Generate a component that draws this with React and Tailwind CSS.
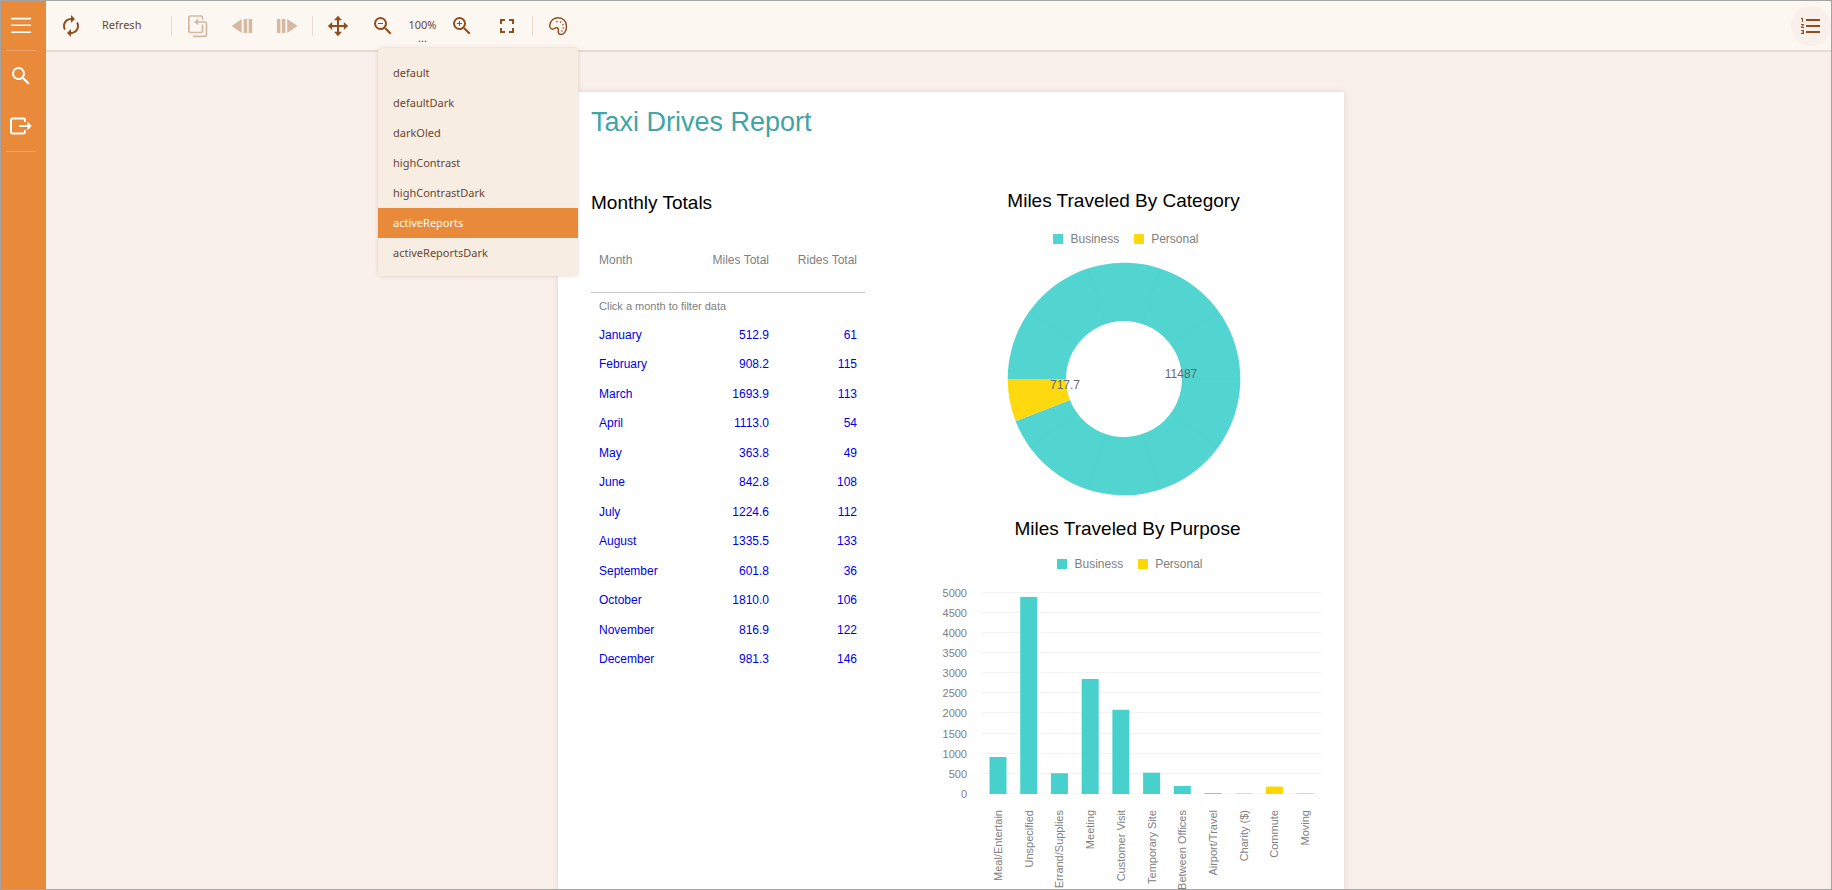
import React from "react";
import {
  MdAutorenew,
  MdSearch,
  MdZoomIn,
  MdZoomOut,
  MdFullscreen,
  MdFormatListNumbered,
} from "react-icons/md";

const months = [
  ["January", "512.9", 61],
  ["February", "908.2", 115],
  ["March", "1693.9", 113],
  ["April", "1113.0", 54],
  ["May", "363.8", 49],
  ["June", "842.8", 108],
  ["July", "1224.6", 112],
  ["August", "1335.5", 133],
  ["September", "601.8", 36],
  ["October", "1810.0", 106],
  ["November", "816.9", 122],
  ["December", "981.3", 146],
];

const themes = [
  "default",
  "defaultDark",
  "darkOled",
  "highContrast",
  "highContrastDark",
  "activeReports",
  "activeReportsDark",
];

const purposes = [
  ["Meal/Entertain", 918, "b"],
  ["Unspecified", 4890, "b"],
  ["Errand/Supplies", 515, "b"],
  ["Meeting", 2855, "b"],
  ["Customer Visit", 2090, "b"],
  ["Temporary Site", 530, "b"],
  ["Between Offices", 200, "b"],
  ["Airport/Travel", 20, "b"],
  ["Charity ($)", 15, "p"],
  ["Commute", 185, "p"],
  ["Moving", 18, "p"],
];

function MenuIcon() {
  return (
    <svg width="24" height="24" viewBox="0 0 24 24" stroke="currentColor" strokeWidth="1.6">
      <path d="M2 5.600h20M2 12.200h20M2 19.200h20" />
    </svg>
  );
}

function ExportIcon() {
  return (
    <svg width="24" height="24" viewBox="0 0 24 24" fill="none" stroke="currentColor" strokeWidth="2">
      <path d="M17 8V6a1.400 1.400 0 0 0-1.400-1.400H4.400A1.400 1.400 0 0 0 3 6v12a1.400 1.400 0 0 0 1.400 1.400h11.200A1.400 1.400 0 0 0 17 18v-2" />
      <path d="M11 12h9" />
      <path d="M19.500 7.800 23.700 12l-4.200 4.200z" fill="currentColor" stroke="none" />
    </svg>
  );
}

function ParentIcon() {
  return (
    <svg width="24" height="24" viewBox="0 0 24 24" fill="none" stroke="currentColor" strokeWidth="1.7">
      <path d="M17.500 5.700V3.500A1.500 1.500 0 0 0 16 2H5.400A1.500 1.500 0 0 0 3.900 3.500V17A1.500 1.500 0 0 0 5.400 18.500H16A1.500 1.500 0 0 0 17.500 17v-6.500" />
      <path d="M12 8h8a1.500 1.500 0 0 1 1.500 1.500v11.300a1.500 1.500 0 0 1-1.500 1.500H8" />
      <path d="M13.200 4.800v6.400L9 8z" fill="currentColor" stroke="none" />
    </svg>
  );
}

function BackIcon() {
  return (
    <svg width="24" height="24" viewBox="0 0 24 24" fill="currentColor">
      <path d="M1.700 12 11.700 5v14zM13.700 5h3.500v14h-3.500zM18.700 5h3.500v14h-3.500z" />
    </svg>
  );
}

function ForwardIcon() {
  return (
    <svg width="24" height="24" viewBox="0 0 24 24" fill="currentColor">
      <path d="M22.600 12 12.200 5v14zM6.900 5h3.500v14H6.900zM1.900 5h3.500v14H1.900z" />
    </svg>
  );
}

function MoveIcon() {
  return (
    <svg width="24" height="24" viewBox="0 0 24 24" fill="currentColor">
      <path d="M11 5h2v14h-2zM5 11h14v2H5z" />
      <path d="M12 1.800 16 6.200H8zM12 22.200 16 17.800H8zM1.800 12 6.200 8v8zM22.200 12 17.800 8v8z" />
    </svg>
  );
}

function PaletteIcon() {
  return (
    <svg width="24" height="24" viewBox="0 0 24 24" fill="none" stroke="currentColor" strokeWidth="1.400">
      <path d="M12.200 3.800c5 0 8.300 3.700 8.300 8.700 0 4.600-2.400 8-5.300 8-2.300 0-3.300-1.500-2.900-3.400.3-1.600.2-3-1.200-3.500-1.600-.6-2.600 1.800-4.500 1.600-2-.2-3.100-1.900-2.800-4.200.5-4.200 4-7.200 8.400-7.200z" />
      <g fill="currentColor" stroke="none">
        <circle cx="11" cy="7.600" r=".8" />
        <circle cx="14.500" cy="8" r=".8" />
        <circle cx="16.900" cy="10.600" r=".8" />
        <circle cx="17.300" cy="14" r=".8" />
        <circle cx="15.900" cy="17" r=".8" />
      </g>
    </svg>
  );
}

function ToolButton({ label, disabled, children }) {
  return (
    <button
      type="button"
      aria-label={label}
      disabled={disabled}
      className="flex h-10 w-11 shrink-0 items-center justify-center text-[#8f4e1e] disabled:text-[#d4b8a2]"
    >
      {children}
    </button>
  );
}

function Divider() {
  return <span className="mx-[2px] h-5 w-px shrink-0 bg-[#ebdccf]" />;
}

function Legend({ soft }) {
  return (
    <div className="flex items-center justify-center gap-[15px] pl-[5px] text-[12px] leading-4 text-[#808080]">
      <span className="flex items-center gap-[7px]">
        <span className={soft ? "size-[10px] bg-[#52d4d0]" : "size-[10px] bg-[#48d1cc]"} />
        Business
      </span>
      <span className="flex items-center gap-[7px]">
        <span className={soft ? "size-[10px] bg-[#ffd90f]" : "size-[10px] bg-[#ffd700]"} />
        Personal
      </span>
    </div>
  );
}

const point = (r, deg) => {
  const a = (deg * Math.PI) / 180;
  return `${117 + r * Math.cos(a)} ${117 + r * Math.sin(a)}`;
};

const ring = (from, to) => {
  const large = to - from > 180 ? 1 : 0;
  return `M${point(116.3, from)}A116.3 116.3 0 ${large} 1 ${point(116.3, to)}L${point(58, to)}A58 58 0 ${large} 0 ${point(58, from)}Z`;
};

function Donut() {
  return (
    <svg width="234" height="234" viewBox="0 0 234 234" role="img" aria-label="Miles by category">
      <path d={ring(-180, 158.8)} fill="#52d4d0" />
      {[0, 36, 72, 108, 144, 216, 252, 288, 324].map((d) => (
        <path key={d} d={`M${point(58, d)}L${point(116, d)}`} stroke="#50d2ce" strokeWidth="1" />
      ))}
      <path d={ring(158.8, 180)} fill="#ffd90f" />
      <g fill="#696969" fontSize="12" textAnchor="middle">
        <text x="58" y="127">717.7</text>
        <text x="174" y="116">11487</text>
      </g>
    </svg>
  );
}

function BarChart() {
  const base = 212;
  return (
    <svg width="387" height="320" viewBox="0 0 387 320" role="img" aria-label="Miles by purpose">
      {Array.from({ length: 11 }, (_, i) => {
        const y = base - i * 20.15;
        return (
          <g key={i}>
            <path d={`M48 ${Math.round(y) - 1}.5H387`} stroke={i ? "#f2f2f2" : "#f7f7f7"} />
            <text x="33" y={Math.round(y) + 4} textAnchor="end" fontSize="11" fill="#808080">
              {i * 500}
            </text>
          </g>
        );
      })}
      {purposes.map(([name, value, kind], i) => {
        const cx = 64 + i * 30.72;
        const h = value * 0.0403;
        return (
          <g key={name}>
            <rect
              x={cx - 8.5}
              y={base - h}
              width="17"
              height={h}
              fill={kind === "b" ? "#48d1cc" : "#ffd700"}
            />
            <text
              transform={`translate(${Math.round(cx) + 4} 228) rotate(-90)`}
              textAnchor="end"
              fontSize="11"
              fill="#808080"
            >
              {name}
            </text>
          </g>
        );
      })}
    </svg>
  );
}

function MonthlyTable() {
  return (
    <table className="mt-[14px] w-full table-fixed border-collapse text-[12px] leading-4">
      <thead>
        <tr className="h-[63px] border-b border-[#c8c8c8] text-[#808080]">
          <th className="pl-2 text-left font-normal">Month</th>
          <th className="w-[88px] pr-2 text-right font-normal">Miles Total</th>
          <th className="w-[88px] pr-2 text-right font-normal">Rides Total</th>
        </tr>
      </thead>
      <tbody className="text-right text-[#0000e6]">
        <tr className="h-[28px]">
          <td colSpan={3} className="pl-2 text-left text-[11px] text-[#808080]">
            Click a month to filter data
          </td>
        </tr>
        {months.map(([m, miles, rides]) => (
          <tr key={m} className="h-[29px] odd:h-[30px]">
            <td className="pl-2 text-left">
              <a href="#month">{m}</a>
            </td>
            <td className="pr-2">{miles}</td>
            <td className="pr-2">{rides}</td>
          </tr>
        ))}
      </tbody>
    </table>
  );
}

export default function App() {
  return (
    <div className="relative flex h-screen overflow-hidden border border-[#a3a3a3] bg-[#faf0eb] font-['Noto_Sans',sans-serif] text-[11px] text-[#6b4630]">
      <nav className="flex w-[45px] shrink-0 flex-col bg-[#e98a3a] pl-[5px] text-white">
        <button type="button" aria-label="Menu" className="mb-px flex h-12 items-center pl-[3px]">
          <MenuIcon />
        </button>
        <span className="h-px w-[30px] bg-[#efa367]" />
        <button type="button" aria-label="Search" className="flex h-[50px] items-center pl-[3px]">
          <MdSearch size={24} />
        </button>
        <button type="button" aria-label="Export" className="flex h-[50px] items-center pl-[2px]">
          <ExportIcon />
        </button>
        <span className="h-px w-[30px] bg-[#efa367]" />
      </nav>

      <div className="flex min-w-0 flex-1 flex-col">
        <header className="flex h-[51px] shrink-0 items-center gap-px border-b-2 border-[#e4dacd] bg-[#fdf7f1] pl-[3px]">
          <button type="button" className="flex h-10 w-[119px] shrink-0 items-center gap-[19px] pl-[10px]">
            <MdAutorenew size={24} className="text-[#8f4e1e]" />
            Refresh
          </button>
          <Divider />
          <ToolButton label="Go to parent report" disabled><ParentIcon /></ToolButton>
          <ToolButton label="Back" disabled><BackIcon /></ToolButton>
          <ToolButton label="Forward" disabled><ForwardIcon /></ToolButton>
          <Divider />
          <ToolButton label="Pan"><MoveIcon /></ToolButton>
          <ToolButton label="Zoom out"><MdZoomOut size={24} /></ToolButton>
          <button type="button" className="relative h-10 w-[33px] shrink-0">
            100%
            <span className="absolute inset-x-0 bottom-[2px] leading-3">...</span>
          </button>
          <ToolButton label="Zoom in"><MdZoomIn size={24} /></ToolButton>
          <ToolButton label="Full screen"><MdFullscreen size={24} /></ToolButton>
          <Divider />
          <ToolButton label="Theme"><PaletteIcon /></ToolButton>
          <button
            type="button"
            aria-label="Parameters"
            className="ml-auto flex size-10 shrink-0 items-center justify-center rounded-full bg-[#f9f0eb] text-[#8f4e1e]"
          >
            <MdFormatListNumbered size={24} />
          </button>
        </header>

        <main className="flex min-h-0 flex-1 items-start justify-center overflow-hidden pt-10 pl-[25px] font-['Liberation_Sans',Arial,sans-serif]">
          <article className="w-[786px] shrink-0 bg-white pt-[14px] pr-[23px] pb-16 pl-[33px] shadow-[0_0_6px_rgba(120,70,70,0.18)]">
            <h1 className="text-[27px] leading-8 text-[#3fa5a7]">Taxi Drives Report</h1>
            <div className="mt-[51px] flex items-start justify-between">
              <section className="w-[274px] pt-[2px]">
                <h2 className="text-[19px] leading-6 text-black">Monthly Totals</h2>
                <MonthlyTable />
              </section>
              <div className="w-[387px] text-center">
                <section className="pr-2">
                  <h2 className="mb-[18px] text-[19px] leading-6 text-black">Miles Traveled By Category</h2>
                  <Legend soft />
                  <div className="mt-[15px] flex justify-center">
                    <Donut />
                  </div>
                </section>
                <section className="mt-[21px]">
                  <h2 className="mb-[15px] text-[19px] leading-6 text-black">Miles Traveled By Purpose</h2>
                  <Legend />
                  <div className="mt-[10px]">
                    <BarChart />
                  </div>
                </section>
              </div>
            </div>
          </article>
        </main>
      </div>

      <ul className="absolute top-[47px] left-[377px] w-[200px] rounded-sm bg-[#f7ede2] pt-[10px] pb-[8px] shadow-[0_0_4px_rgba(120,70,40,0.2)]">
        {themes.map((t) => (
          <li key={t}>
            <button
              type="button"
              className={
                t === "activeReports"
                  ? "h-[30px] w-full bg-[#e98a3a] px-[15px] text-left text-white"
                  : "h-[30px] w-full px-[15px] text-left"
              }
            >
              {t}
            </button>
          </li>
        ))}
      </ul>
    </div>
  );
}
